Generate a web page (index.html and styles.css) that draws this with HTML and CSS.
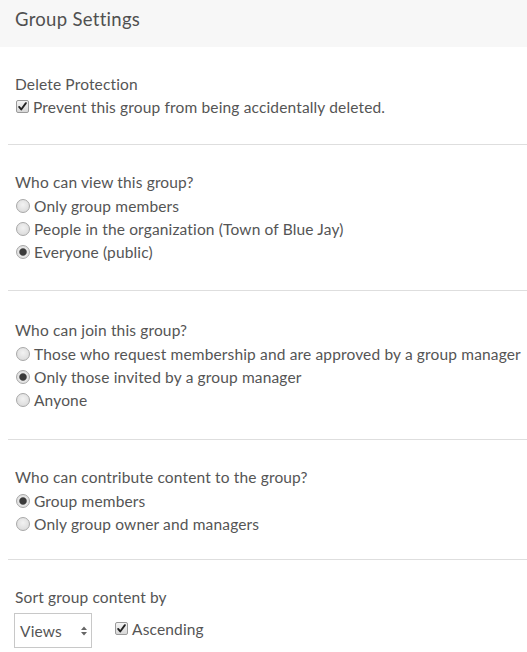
FILE: index.html
```html
<!DOCTYPE html>
<html>
<head>
<meta charset="utf-8">
<link rel="stylesheet" href="styles.css">
</head>
<body>
<div class="header"><h1 class="title">Group Settings</h1></div>
<div class="content">
  <section class="section s1">
    <div class="heading">Delete Protection</div>
    <div class="row"><span class="check"><svg viewBox="0 0 13 13" width="13" height="13"><path d="M2.5 7 L5 10 L10.5 2.5" fill="none" stroke="#222" stroke-width="2.2" stroke-linecap="round" stroke-linejoin="round"/></svg></span><span class="label">Prevent this group from being accidentally deleted.</span></div>
  </section>
  <section class="section s2">
    <div class="heading">Who can view this group?</div>
    <div class="row"><span class="radio"></span><span class="label">Only group members</span></div>
    <div class="row"><span class="radio"></span><span class="label">People in the organization (Town of Blue Jay)</span></div>
    <div class="row"><span class="radio on"></span><span class="label">Everyone (public)</span></div>
  </section>
  <section class="section s3">
    <div class="heading">Who can join this group?</div>
    <div class="row"><span class="radio"></span><span class="label">Those who request membership and are approved by a group manager</span></div>
    <div class="row"><span class="radio on"></span><span class="label">Only those invited by a group manager</span></div>
    <div class="row"><span class="radio"></span><span class="label">Anyone</span></div>
  </section>
  <section class="section s4">
    <div class="heading">Who can contribute content to the group?</div>
    <div class="row"><span class="radio on"></span><span class="label">Group members</span></div>
    <div class="row"><span class="radio"></span><span class="label">Only group owner and managers</span></div>
  </section>
  <section class="section s5 last">
    <div class="heading">Sort group content by</div>
    <div class="sortrow">
      <div class="select"><span>Views</span><svg class="arrows" viewBox="0 0 8 12" width="8" height="12"><path d="M1 5 L4 1.5 L7 5 Z M1 7 L4 10.5 L7 7 Z" fill="#666"/></svg></div>
      <div class="ascend"><span class="check"><svg viewBox="0 0 13 13" width="13" height="13"><path d="M2.5 7 L5 10 L10.5 2.5" fill="none" stroke="#222" stroke-width="2.2" stroke-linecap="round" stroke-linejoin="round"/></svg></span><span class="label">Ascending</span></div>
    </div>
  </section>
</div>
</body>
</html>
```
FILE: styles.css
```css
html, body { margin: 0; padding: 0; background: #fff; }
body { font-family: Lato, "Open Sans", sans-serif; color: #555; font-size: 15.5px; letter-spacing: 0.15px; }
.header { height: 47px; background: #f7f7f7; padding-left: 15px; box-sizing: border-box; }
.title { margin: 0; font-weight: 400; font-size: 18.5px; letter-spacing: 0.3px; line-height: 38px; color: #505050; }
.content { margin-left: 8px; }
.section { padding: 26px 0 26px 7px; border-bottom: 1px solid #dedede; }
.section.s1 { padding-top: 27px; }
.section.s2 { padding-bottom: 27px; }
.section.s3 { padding-top: 28px; padding-bottom: 28px; }
.section.s4 { padding-bottom: 24px; }
.section.last { border-bottom: none; padding-top: 26px; padding-bottom: 0; }
.heading { line-height: 23px; white-space: nowrap; }
.s1 .heading { line-height: 21px; }
.row { display: flex; align-items: center; height: 23px; white-space: nowrap; }
.radio { width: 12px; height: 12px; border-radius: 50%; border: 1px solid #a8a8a8; background: radial-gradient(circle at 50% 40%, #f2f2f2 0%, #d6d6d6 100%); margin-left: 1px; margin-right: 4px; flex: none; box-sizing: content-box; }
.radio.on { background: radial-gradient(circle, #3a3a3a 0, #3a3a3a 3px, #7a7a7a 3.6px, #e6e6e6 4.2px, #d8d8d8 100%); }
.check { width: 13px; height: 13px; border: 1px solid #9a9a9a; border-radius: 2px; background: linear-gradient(#f4f4f4, #d8d8d8); box-sizing: border-box; margin-left: 1px; margin-right: 4px; flex: none; display: flex; align-items: center; justify-content: center; }
.check svg { display: block; width: 11px; height: 11px; }
.sortrow { display: flex; align-items: center; margin-top: 4px; }
.select { width: 78px; height: 35px; box-sizing: border-box; border: 1px solid #c8c8c8; display: flex; align-items: center; justify-content: space-between; padding: 0 3px 0 5px; margin-left: -1px; }
.arrows { display: block; }
.ascend { display: flex; align-items: center; margin-left: 22px; margin-top: -4px; }
```
